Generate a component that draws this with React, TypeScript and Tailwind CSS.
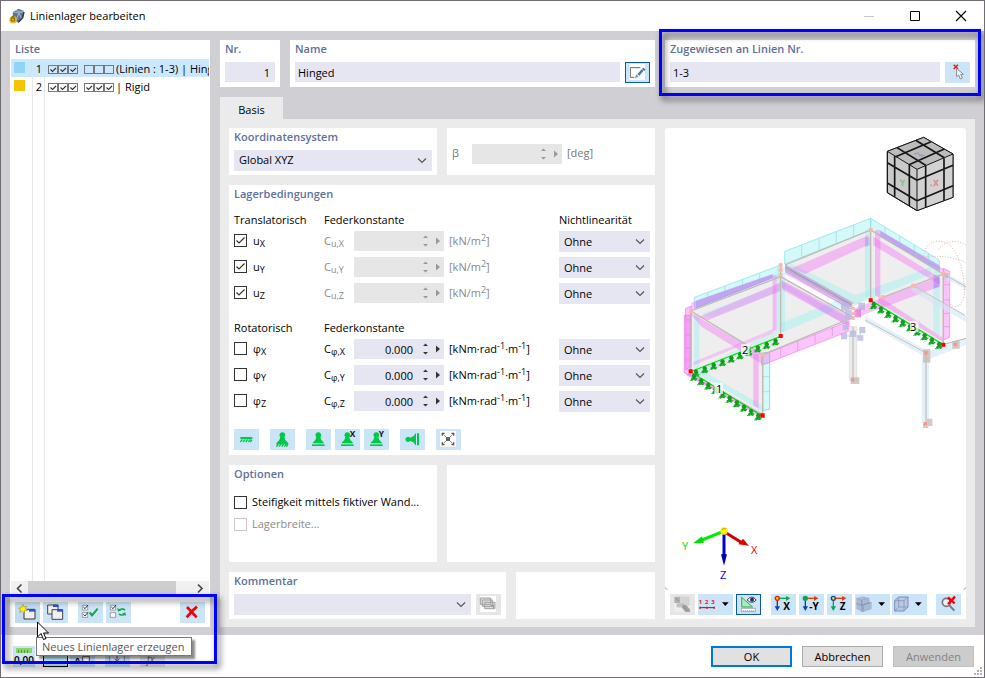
import React from 'react';

type IconProps = { children: React.ReactNode; wide?: boolean };

// Toolbar icons are drawn on a 75x63 grid, three units to a pixel
const Icon: React.FC<IconProps> = ({ children, wide }) => (
  <svg
    className={wide ? 'block h-[21px] w-[35px]' : 'block h-[21px] w-[25px]'}
    viewBox={wide ? '0 0 105 63' : '0 0 75 63'}
    fill="none"
  >
    {children}
  </svg>
);

type ToolProps = {
  label: string;
  children?: React.ReactNode;
  wide?: boolean;
  className?: string;
  disabled?: boolean;
};

const Tool: React.FC<ToolProps> = ({ label, children, wide, className = 'bg-[#cce4f7]', disabled }) => (
  <button type="button" aria-label={label} disabled={disabled} className={`shrink-0 ${className}`}>
    <Icon wide={wide}>{children}</Icon>
  </button>
);

const Card: React.FC<{ title?: string; className?: string; children?: React.ReactNode }> = ({
  title,
  className = '',
  children,
}) => (
  <section className={`bg-white px-[5px] pb-1 ${className}`}>
    {title && <h2 className="h-[18px] whitespace-nowrap font-semibold leading-[18px] text-[#5f6f98]">{title}</h2>}
    {children}
  </section>
);

const Select: React.FC<{ label: string; options: string[]; className?: string }> = ({
  label,
  options,
  className = '',
}) => (
  <div className={`relative h-[21px] ${className}`}>
    <select
      aria-label={label}
      className="block h-full w-full appearance-none bg-[#e6e6f2] pl-[5px] pr-5 text-black outline-none"
    >
      {options.map((o) => (
        <option key={o}>{o}</option>
      ))}
    </select>
    <svg className="pointer-events-none absolute right-1 top-[7px] h-2 w-3" viewBox="0 0 12 8" fill="none">
      <path d="M2 1.5 6 5.5 10 1.5" stroke="#555" strokeWidth="1.1" />
    </svg>
  </div>
);

const Spinner: React.FC<{ label: string; value?: string; disabled?: boolean }> = ({ label, value = '', disabled }) => (
  <div className={`flex h-5 w-[90px] items-center ${disabled ? 'bg-[#e6e6e6] text-[#999]' : 'bg-[#e6e6f2] text-[#333]'}`}>
    <input
      aria-label={label}
      defaultValue={value}
      disabled={disabled}
      className="h-full w-[59px] bg-transparent text-right text-black outline-none"
    />
    <svg className="ml-auto h-5 w-[26px]" viewBox="0 0 26 20" fill="currentColor">
      <path d="M5 7 7.500 4.500 10 7zM5 13l2.500 2.500L10 13zM18 6.500v7l4-3.500z" />
    </svg>
  </div>
);

const CheckBox: React.FC<{ id: string; checked?: boolean; disabled?: boolean }> = ({ id, checked, disabled }) => (
  <span className="relative h-[13px] w-[13px] shrink-0">
    <input
      id={id}
      type="checkbox"
      defaultChecked={checked}
      disabled={disabled}
      className="peer block h-[13px] w-[13px] appearance-none border border-[#333] bg-white disabled:border-[#c8c8c8]"
    />
    <svg
      className="pointer-events-none absolute left-0 top-0 hidden h-[13px] w-[13px] peer-checked:block"
      viewBox="0 0 13 13"
      fill="none"
    >
      <path d="M2.500 6.500 5 9 10.500 3.500" stroke="#333" strokeWidth="1.2" />
    </svg>
  </span>
);

const MiniBoxes: React.FC<{ checked: boolean }> = ({ checked }) => (
  <svg className="h-2.5 w-[30px] shrink-0" viewBox="0 0 30 10" fill="none" stroke="#333">
    {[0, 10, 20].map((x) => (
      <g key={x}>
        <rect x={x + 0.5} y="0.5" width="9" height="8" stroke="#777" />
        {checked && <path d={`M${x + 2.5} 4.500l2 2 3.500-3.500`} strokeWidth="1.1" />}
      </g>
    ))}
  </svg>
);

const listItems = [
  { no: 1, color: 'bg-[#8fd6f5]', row: 'bg-[#cce8ff]', rotation: false, text: '(Linien : 1-3) | Hinged' },
  { no: 2, color: 'bg-[#f5c400]', row: '', rotation: true, text: '| Rigid' },
];

const ListPanel: React.FC = () => (
  <aside className="flex w-[200px] shrink-0 flex-col bg-white px-px pb-1">
    <h2 className="mb-px h-[18px] pl-1 font-semibold leading-[18px] text-[#5f6f98]">Liste</h2>
    <div className="flex-1 bg-[linear-gradient(#e8e8e8,#e8e8e8),linear-gradient(#e8e8e8,#e8e8e8)] bg-[length:1px_100%,1px_100%] bg-[position:21px_0,33px_0] bg-no-repeat">
      <ul>
        {listItems.map((item) => (
          <li key={item.no} className={`flex h-[18px] overflow-hidden whitespace-nowrap leading-5 text-black ${item.row}`}>
            <span className={`ml-[3px] mt-[3px] h-[11px] w-[11px] shrink-0 ${item.color}`} />
            <span className="w-[17px] shrink-0 text-right">{item.no}</span>
            <span className="ml-1.5 mt-1.5 flex gap-1.5">
              <MiniBoxes checked />
              <MiniBoxes checked={item.rotation} />
            </span>
            <span className="ml-0.5">{item.text}</span>
          </li>
        ))}
      </ul>
    </div>
    <div className="mb-2 flex h-[13px] items-stretch bg-[#f0f0f0]">
      <svg className="h-[13px] w-[17px]" viewBox="0 0 17 13" fill="none">
        <path d="M10.500 3.500 6.500 7.500l4 4" stroke="#444" strokeWidth="1.6" />
      </svg>
      <div className="w-[148px] bg-[#cdcdcd]" />
      <svg className="ml-auto h-[13px] w-[17px]" viewBox="0 0 17 13" fill="none">
        <path d="M6 3.500 10 7.500l-4 4" stroke="#444" strokeWidth="1.6" />
      </svg>
    </div>
    <div className="flex px-1">
      <Tool label="Neues Linienlager erzeugen" className="bg-[#c0dcf3]">
        <path d="M27 22h33v29H27z" fill="#eef0f4" stroke="#333" strokeWidth="3" />
        <path d="M42 22h18v7H42z" fill="#2a50d8" />
        <path d="m24 7 3 8 9-2-5 7 7 5-9 1-2 8-5-6-8 3 3-8-6-4 8-2z" fill="#fff200" stroke="#a89820" strokeWidth="2" />
      </Tool>
      <Tool label="Kopieren" className="ml-[3px] bg-[#cce4f7]">
        <path d="M14 9h31v27H14z" fill="#eef0f4" stroke="#444" strokeWidth="3" />
        <path d="M30 8h16v7H30z" fill="#2a50d8" />
        <path d="M27 23h32v29H27z" fill="#eef0f4" stroke="#444" strokeWidth="3" />
        <path d="M42 22h18v7H42z" fill="#2a50d8" />
      </Tool>
      <Tool label="Alle markieren" className="ml-2.5 bg-[#cce4f7]">
        <path d="M13 10h16v14H13zM13 32h16v14H13z" fill="#fff" stroke="#777" strokeWidth="2" />
        <path d="m16 15 5 5 9-11M16 37l5 5 9-11" stroke="#333" strokeWidth="3" />
        <path d="m35 31 7 9 17-20" stroke="#10a848" strokeWidth="6" />
      </Tool>
      <Tool label="Auswahl umkehren" className="ml-[3px] bg-[#cce4f7]">
        <path d="M13 10h16v14H13zM13 32h16v14H13z" fill="#fff" stroke="#777" strokeWidth="2" />
        <path d="m16 15 5 5 9-11" stroke="#333" strokeWidth="3" />
        <path d="M39 25c4-5 13-6 18 0M56 35c-4 5-12 5-17 1" stroke="#10a848" strokeWidth="5" />
        <path d="m34 18 2 11 10-4zM60 42l-2-11-10 4z" fill="#10a848" />
      </Tool>
      <Tool label="Löschen" className="ml-auto bg-[#cce4f7]">
        <path d="M21 15c8 8 18 19 29 31M51 14C39 23 29 34 20 46" stroke="#f80000" strokeWidth="8" />
      </Tool>
    </div>
  </aside>
);

const supportPath = 'M37 10a8 8 0 0 1 6 14l3 9 8 8v2H20v-2l8-8 3-9a8 8 0 0 1 6-14z';

const SupportTools: React.FC = () => (
  <div className="mt-[17px] flex">
    <Tool label="Linie gelagert">
      <path d="M19 24h36v6H19z" fill="#00c94a" />
      <path d="m19 39 6-8m2 8 6-8m2 8 6-8m2 8 6-8m0 8 5-7" stroke="#00c94a" strokeWidth="4" />
    </Tool>
    <Tool label="Eingespannt" className="ml-[11px] bg-[#cce4f7]">
      <path d={supportPath} fill="#00c94a" />
      <path d="m19 53 6-8m2 8 6-8m2 8 6-8m2 8 6-8m0 8 5-7M19 44h36" stroke="#00c94a" strokeWidth="4" />
    </Tool>
    <Tool label="Gelenkig" className="ml-[11px] bg-[#cce4f7]">
      <path d={supportPath} fill="#00c94a" />
      <path d="M18 46h38v5H18z" fill="#00c94a" />
    </Tool>
    <Tool label="Gelenkig X" className="ml-1 bg-[#cce4f7]">
      <path d={supportPath} fill="#00c94a" />
      <path d="M18 46h38v5H18z" fill="#00c94a" />
      <text x="44" y="24" fontSize="25" fontWeight="700" fill="#111">X</text>
    </Tool>
    <Tool label="Gelenkig Y" className="ml-1 bg-[#cce4f7]">
      <path d={supportPath} fill="#00c94a" />
      <path d="M18 46h38v5H18z" fill="#00c94a" />
      <text x="44" y="24" fontSize="25" fontWeight="700" fill="#111">Y</text>
    </Tool>
    <Tool label="Seitlich gelagert" className="ml-[11px] bg-[#cce4f7]">
      <path d="M16 31a8 8 0 0 1 14-5l10-4 7-9h1v36h-1l-7-9-10-4a8 8 0 0 1-14-5zM51 13h6v36h-6z" fill="#00c94a" />
    </Tool>
    <Tool label="Frei" className="ml-[11px] bg-[#cce4f7]">
      <path d="M12 6h48v48H12z" fill="#fff" />
      <path d="m22 16 28 28M50 16 22 44" stroke="#888" strokeWidth="3" />
      <path d="M30 24h12v12H30z" fill="#5c6850" />
      <path d="M19 20v-7h7M46 13h7v7M19 40v7h7M53 40v7h-7" stroke="#555" strokeWidth="4" />
    </Tool>
  </div>
);

type ConditionRow = { id: string; symbol: string; axis: string; checked: boolean };

const translations: ConditionRow[] = [
  { id: 'ux', symbol: 'u', axis: 'X', checked: true },
  { id: 'uy', symbol: 'u', axis: 'Y', checked: true },
  { id: 'uz', symbol: 'u', axis: 'Z', checked: true },
];

const rotations: ConditionRow[] = [
  { id: 'phix', symbol: 'φ', axis: 'X', checked: false },
  { id: 'phiy', symbol: 'φ', axis: 'Y', checked: false },
  { id: 'phiz', symbol: 'φ', axis: 'Z', checked: false },
];

const Small: React.FC<{ children: React.ReactNode; up?: boolean }> = ({ children, up }) => (
  <span className={up ? 'align-[4px] text-[9px] leading-none' : 'align-[-2px] text-[9px] leading-none'}>{children}</span>
);

const Conditions: React.FC<{ rows: ConditionRow[] }> = ({ rows }) => (
  <div className="mt-0.5 space-y-[5px]">
    {rows.map((r) => (
      <div key={r.id} className="grid grid-cols-[90px_30px_90px_1fr_91px] items-start leading-5">
        <div className="flex h-[19px] items-center gap-1.5">
          <CheckBox id={r.id} checked={r.checked} />
          <label htmlFor={r.id} className="whitespace-nowrap text-black">
            {r.symbol}
            <Small>{r.axis}</Small>
          </label>
        </div>
        <span className={`h-5 whitespace-nowrap ${r.checked ? 'text-[#888]' : 'text-black'}`}>
          C
          <Small>
            {r.symbol},{r.axis}
          </Small>
        </span>
        <Spinner label={`Federkonstante ${r.symbol}${r.axis}`} value={r.checked ? '' : '0.000'} disabled={r.checked} />
        {r.checked ? (
          <span className="h-5 whitespace-nowrap pl-[5px] text-[#888]">
            [kN/m<Small up>2</Small>]
          </span>
        ) : (
          <span className="h-5 whitespace-nowrap pl-[5px] text-black">
            [kNm·rad<Small up>-1</Small>·m<Small up>-1</Small>]
          </span>
        )}
        <Select label={`Nichtlinearität ${r.symbol}${r.axis}`} options={['Ohne']} />
      </div>
    ))}
  </div>
);

// Support symbols spread evenly along a line of the model
const SupportLine: React.FC<{ from: [number, number]; to: [number, number]; n: number }> = ({ from, to, n }) => (
  <g>
    <path d={`M${from[0]} ${from[1]}L${to[0]} ${to[1]}`} stroke="#00e800" strokeWidth="4" />
    {Array.from({ length: n }, (_, i) => {
      const t = (i + 0.4) / n;
      const x = from[0] + (to[0] - from[0]) * t;
      const y = from[1] + (to[1] - from[1]) * t;
      return (
        <g key={i} transform={`translate(${x} ${y})`}>
          <path d="M-3 0H4L8 8 5 11 11 15 6 21 0 19-7 22-9 15-4 11-7 7z" fill="#149a24" />
          <path d="M-12 20 12 14" stroke="#20d030" strokeWidth="3" strokeDasharray="5 3" />
        </g>
      );
    })}
  </g>
);

const Model: React.FC = () => (
  <g transform="translate(0 82) scale(.33333)" fill="none">
    {/* walls */}
    <g fill="#eeeeee">
      <path d="M78 303 347 200V378L78 483z" />
      <path d="M78 303 293 434V616L78 483z" />
      <path d="M617 60 835 192V404L617 271z" />
      <path d="M360 165 617 60V260L565 290z" />
      <path d="M347 200 565 320 293 434 78 303z" />
    </g>
    {/* cyan bands */}
    <g fill="#90f0f0" fillOpacity=".4">
      <path d="M88 262 347 165V195L88 296z" stroke="#80e0e8" strokeWidth="2" />
      <path d="M359 124 617 25V60L359 162z" stroke="#80e0e8" strokeWidth="2" />
      <path d="M617 25 823 150V186L617 60z" stroke="#80e0e8" strokeWidth="2" />
      <path d="M88 310 103 318V470L88 478z" />
      <path d="M335 170H360V360L335 372z" />
      <path d="M293 428H314V598L293 602z" stroke="#70c8e0" strokeWidth="2" />
      <path d="M110 312 347 222V242L140 322z" />
      <path d="M600 60H617V255L600 264z" />
      <path d="M375 160 570 255 800 170V192L572 284 375 188z" />
      <path d="M805 180H824V375L805 364z" />
      <path d="M100 475 290 585V603L90 485z" />
      <path d="M110 470 335 362V380L110 488z" fillOpacity=".25" />
      <path d="M347 340 540 262 556 280 347 370z" />
    </g>
    {/* magenta bands */}
    <g fill="#f46cf4" fillOpacity=".4">
      <path d="M62 296 78 288V468L62 480z" stroke="#f070f0" strokeWidth="2" />
      <path d="M58 316H76V497L58 488z" stroke="#f070f0" strokeWidth="2" />
      <path d="M100 322 345 218V244L130 330z" />
      <path d="M70 304 290 432V462L110 350z" />
      <path d="M323 195H335V358L323 366z" />
      <path d="M78 278 323 193V205L78 300z" />
      <path d="M85 456 323 358V370L85 466z" fillOpacity=".3" />
      <path d="M350 210 555 320V352L350 238z" />
      <path d="M360 165 560 280V300L360 192z" />
      <path d="M290 436 550 334V364L290 466z" stroke="#f080f0" strokeWidth="2" />
      <path d="M265 432H281V594L265 586z" />
      <path d="M380 175 610 76V104L420 192z" />
      <path d="M630 60H646V262L630 256z" />
      <path d="M646 62 838 178V190L646 82z" />
      <path d="M625 80 825 204V224L625 106z" />
      <path d="M835 175 854 184V382L835 390z" stroke="#f080f0" strokeWidth="2" />
      <path d="M570 294 822 200V230L580 320z" />
      <path d="M640 258 835 384V396L640 278z" />
      <path d="M78 488 290 610V622L62 494z" fillOpacity=".6" />
    </g>
    <g fill="#8060e8" fillOpacity=".3">
      <path d="M92 272 323 192V204L92 296z" />
      <path d="M360 165 560 280V292L360 182z" />
      <path d="M350 214 545 322V345L350 232z" fillOpacity=".15" />
      <path d="M646 62 823 165V184L646 80z" />
      <path d="M806 196H824V230L806 236z" />
      <path d="M600 82H617V106L600 112z" fillOpacity=".2" />
    </g>
    {/* rulings of the load bands */}
    <g stroke="#80c8d8" strokeWidth="2" opacity=".7">
      <path d="M128 248v28M180 228v28M232 208v28M284 190v28M410 105v34M462 86v33M514 65v34M566 45v34M660 52v32M704 78v32M748 105v32M790 130v32M293 460h20M293 500h20M293 545h20" />
      <path d="M347 440v-26M398 422v-28M450 400v-26M502 378v-26M62 330h14M62 375h14M62 415h14M62 450h14M836 224h18M836 270h18M836 310h18M836 350h18" stroke="#c878d8" />
    </g>
    {/* frame edges */}
    <path
      d="M78 303 347 200M78 303 293 434M78 303V483M347 165V378M293 434V616M293 434 565 322M347 200 565 322M360 165 617 60 835 192V404M617 60V271M360 165 565 280M362 178 560 292M653 262 835 192"
      stroke="#bcbcb4"
      strokeWidth="4"
    />
    <path d="M362 172 562 286M362 185 558 298" stroke="#6860b0" strokeOpacity=".5" strokeWidth="2" />
    {/* columns and beams of the neighbouring frame */}
    <g fill="#cfe6f4" fillOpacity=".55">
      <path d="M770 440H792V640H770z" />
      <path d="M600 318 790 424 780 442 600 336z" />
      <path d="M790 424 903 385V405L795 446z" />
      <path d="M740 224 903 318V336L740 244z" />
      <path d="M835 186 903 222V240L835 202z" />
    </g>
    <path d="M745 227 900 316M835 192 903 230M600 330 785 430" stroke="#c4c4c0" strokeWidth="3" />
    <path d="M553 350H575V512H553z" fill="#ececec" stroke="#dcdcdc" strokeWidth="2" />
    <path d="M564 350V508M783 430V640M835 404 903 385" stroke="#b4b4b4" strokeWidth="3" />
    <g stroke="#e4b4b4" strokeWidth="3" strokeDasharray="3 5">
      <path d="M776 140C780 95 815 85 845 100S898 180 898 240M776 140C830 135 890 145 903 160M820 118C840 90 880 90 903 105M840 190C838 260 850 290 870 290S900 265 900 225" />
    </g>
    <g fill="#b8b8e0" fillOpacity=".8">
      <path d="M528 280h24v22h-24zM580 278h20v22h-20zM533 344h16v16h-16zM583 351h18v18h-18zM528 370h18v18h-18zM555 362h18v18h-18zM577 376h18v16h-18zM540 300h20v26h-20z" />
    </g>
    <path d="M540 325V378H586V350" stroke="#c4c4e4" strokeWidth="3" />
    <path d="M568 298h20v24h-20z" fill="#e070d0" fillOpacity=".7" />
    <g fill="#f8b8ac">
      <path d="M341 160h12v10h-12zM341 175h12v10h-12zM341 190h12v10h-12zM611 54h12v12h-12zM647 256h12v12h-12zM739 221h12v12h-12zM72 297h12v12h-12zM287 428h12v12h-12zM829 186h12v12h-12zM559 290h10v10h-10zM559 305h10v10h-10zM559 320h10v10h-10z" />
    </g>
    <g fill="#c8b8b0" fillOpacity=".75">
      <path d="M557 502h26v20h-26zM774 418h22v40h-22zM862 392h22v24h-22zM786 626h16v22h-16zM774 640h16v14h-16zM836 190h14v14h-14z" />
    </g>
    <g fill="#f09890">
      <path d="M558 505h10v10h-10zM776 636h10v10h-10zM866 398h10v10h-10zM778 424h10v10h-10z" />
    </g>
    <SupportLine from={[82, 483]} to={[347, 379]} n={10} />
    <SupportLine from={[78, 486]} to={[292, 618]} n={10} />
    <SupportLine from={[617, 271]} to={[835, 404]} n={10} />
    <g fill="#ff0000">
      <path d="M71 478h12v12H71zM341 372h12v12h-12zM286 610h13v13h-13zM611 265h12v12h-12zM829 398h12v12h-12z" />
    </g>
    <g fill="#fff" fillOpacity=".75">
      <path d="M228 402h26v34h-26zM148 518h26v34h-26zM735 333h26v34h-26z" />
    </g>
  </g>
);

const Cube: React.FC = () => (
  <g transform="translate(-10 -128) scale(.33333)">
    <path d="M806 412 894 462V592L786 632 697 578V454z" fill="#cacaca" stroke="#161616" strokeWidth="3" />
    <path d="M697 454 786 508 894 462 806 412z" fill="#bcbcbc" />
    <path d="M786 508 894 462V592L786 632z" fill="#d2d2d2" />
    <g fill="none" stroke="#161616" strokeWidth="5" strokeLinejoin="round">
      <path d="M786 508V632M697 454 786 508 894 462" strokeWidth="3" />
      <path d="M719 468V590M763 495V618M697 488 786 541M697 549 786 602" />
      <path d="M812 498V622M867 475V602M786 541 894 496M786 602 894 557" />
      <path d="M726 443 812 496M782 421 868 473M722 470 828 425M762 494 868 447" />
      <path d="M697 454 806 412 894 462V592L786 632 697 578z" strokeWidth="3" />
    </g>
    <path d="m778 462 12-3 4 8 8-3M798 470l11-5" stroke="#9c9cc8" strokeWidth="4" fill="none" />
    <path d="m735 539 8 8m6-8-6 9v10" stroke="#86c886" strokeWidth="5" fill="none" />
    <path d="m836 540 13 17m0-18-13 20M826 556h5" stroke="#dc9090" strokeWidth="5" fill="none" />
  </g>
);

const Axes: React.FC = () => (
  <g transform="translate(-5 382) scale(.33333)">
    <path d="M190 64 126 90" stroke="#00ee00" strokeWidth="9" />
    <path d="m100 99 26-20 6 20z" fill="#00e000" />
    <path d="m194 66 48 30" stroke="#d00000" strokeWidth="9" />
    <path d="m267 107-18-21-14 17z" fill="#e00000" />
    <path d="M192 66v70" stroke="#0000dd" strokeWidth="9" />
    <path d="m192 167-9-34h18z" fill="#0000a8" />
    <circle cx="192" cy="63" r="11" fill="#ffee00" />
    <path d="M186 60a8 8 0 0 1 11-4" stroke="#b8a000" strokeWidth="3" fill="none" />
  </g>
);

const Drop: React.FC<{ x: number }> = ({ x }) => <path d={`M${x} 25h20l-10 11z`} fill="#000" />;

const Preview: React.FC = () => (
  <section className="flex min-w-0 flex-1 flex-col rounded-t-[3px] bg-white pb-1">
    <svg className="min-h-0 w-full flex-1" viewBox="0 0 301 462" role="img" aria-label="Modell">
      <Cube />
      <Model />
      <Axes />
      <path d="M.500 459.500q0 2 2 2M300.500 459.500q0 2-2 2" stroke="#aaa" fill="none" />
      <g fontSize="11" fill="#000">
        <text x="77" y="226">2</text>
        <text x="51" y="265">1</text>
        <text x="245" y="203">3</text>
      </g>
      <g fontSize="11">
        <text x="17" y="422" fill="#00e000">Y</text>
        <text x="86" y="426" fill="#ee0000">X</text>
        <text x="55" y="451" fill="#0000ee">Z</text>
      </g>
    </svg>
    <div className="mt-1 flex px-[5px]">
      <Tool label="Rendern" disabled className="bg-[#e6e6e6]">
        <path d="M12 6h48v48H12z" fill="#eee" />
        <path d="M13 8h23v19H13z" fill="#b0b0b0" />
        <path d="M30 7h29v28H30z" fill="#d4d4d4" />
        <path d="M20 28h22v12H20z" fill="#c0c0c0" />
        <path d="M38 32h10l12 14v8H46L36 42z" fill="#a4a4a4" />
        <path d="m17 12 9 9M40 36l12 14" stroke="#888" strokeWidth="3" />
      </Tool>
      <Tool label="Nummerierung" wide className="ml-[3px] bg-[#cce4f7]">
        <g fontSize="18" fontWeight="700" fill="#e01818">
          <text x="2" y="31">1</text>
          <text x="21" y="31">2</text>
          <text x="40" y="31">3</text>
        </g>
        <path d="M6 41h43" stroke="#333366" strokeWidth="3" />
        <path d="M4 38h5v6H4zM24 38h5v6h-5zM46 38h5v6h-5z" fill="#d81818" />
        <Drop x={72} />
      </Tool>
      <Tool label="Ansicht" className="ml-[3px] bg-[#cce4f7] outline outline-1 -outline-offset-1 outline-[#0a5a9c]">
        <path d="M17 10v29h33z" fill="#a8ecb8" stroke="#38a860" strokeWidth="3" />
        <path d="M16 43h42v10H16z" fill="#fff" stroke="#888" strokeWidth="2" />
        <path d="M22 48v4m6-4v4m6-4v4m6-4v4m6-4v4m6-4v4" stroke="#888" strokeWidth="2" />
        <path d="M34 18c6-11 20-11 26 0-6 9-20 9-26 0z" fill="#fff" stroke="#333a66" strokeWidth="3" />
        <circle cx="48" cy="17" r="6" fill="#222a66" />
      </Tool>
      <Tool label="Ansicht in X" className="ml-2.5 bg-[#cce4f7]">
        <path d="M20 13h28" stroke="#10a050" strokeWidth="4" />
        <path d="m45 6 13 7-13 8z" fill="#10a050" />
        <path d="M19 16v24" stroke="#1040b0" strokeWidth="4" />
        <path d="m11 37 8 14 8-14z" fill="#1040b0" />
        <circle cx="19" cy="13" r="6" fill="#ffd800" stroke="#d82010" strokeWidth="4" />
        <text x="37" y="49" fontSize="30" fontWeight="700" fill="#000">X</text>
      </Tool>
      <Tool label="Ansicht in -Y" className="ml-[3px] bg-[#cce4f7]">
        <path d="M20 13h28" stroke="#d84010" strokeWidth="4" />
        <path d="m45 6 13 7-13 8z" fill="#d84010" />
        <path d="M19 16v24" stroke="#1040b0" strokeWidth="4" />
        <path d="m11 37 8 14 8-14z" fill="#1040b0" />
        <circle cx="19" cy="13" r="8" fill="#10a050" />
        <text x="31" y="49" fontSize="30" fontWeight="700" fill="#000">-Y</text>
      </Tool>
      <Tool label="Ansicht in Z" className="ml-[3px] bg-[#cce4f7]">
        <path d="M20 13h28" stroke="#d84010" strokeWidth="4" />
        <path d="m45 6 13 7-13 8z" fill="#d84010" />
        <path d="M19 16v24" stroke="#10a050" strokeWidth="4" />
        <path d="m11 37 8 14 8-14z" fill="#10a050" />
        <circle cx="19" cy="13" r="6" fill="#ffd800" stroke="#1040b0" strokeWidth="4" />
        <text x="38" y="49" fontSize="30" fontWeight="700" fill="#000">Z</text>
      </Tool>
      <Tool label="Darstellung" wide className="ml-[3px] bg-[#cce4f7]">
        <path d="M4 13 24 7l18 5v14l8-2v18L22 53 4 45z" fill="#a8bad4" />
        <path d="m4 13 16 5 22-6v14l-22 7v20l30-9" stroke="#8ca0c0" strokeWidth="2" />
        <path d="M20 18v15l4 3v16M4 29l16 5 28-9" stroke="#7088ac" strokeWidth="2" />
        <Drop x={70} />
      </Tool>
      <Tool label="Schnittbox" wide className="ml-0.5 bg-[#cce4f7]">
        <path d="M8 20 20 9h28v30L36 51H8z" fill="#b8c8e2" stroke="#7890b4" strokeWidth="3" />
        <path d="M8 20h28v31M36 20 48 9M20 9v30h28M20 39 8 51" stroke="#7890b4" strokeWidth="2" />
        <Drop x={69} />
      </Tool>
      <Tool label="Ansicht zurücksetzen" className="ml-auto bg-[#cce4f7]">
        <circle cx="31" cy="25" r="12" stroke="#777" strokeWidth="5" fill="#e8f0f8" />
        <path d="m40 34 15 16" stroke="#777" strokeWidth="6" />
        <path d="m36 10 20 18M57 8 36 30" stroke="#f00000" strokeWidth="7" />
      </Tool>
    </div>
  </section>
);

const TitleBar: React.FC = () => (
  <header className="flex h-[30px] items-center bg-white pl-2 text-black">
    <svg className="h-4 w-4" viewBox="0 0 48 48">
      <path d="M12 12 28 2l17 7-3 20-14 15-18-12z" fill="#5c7890" />
      <path d="m14 12 16 3 8 17M20 7l18 6M30 14 22 36M45 10l-13 4" stroke="#a8bcd4" strokeWidth="3" fill="none" />
      <path d="m28 43 13-13 4-18" stroke="#28384c" strokeWidth="4" fill="none" />
      <circle cx="12" cy="35" r="11" fill="#e8b820" />
      <path d="M7 31h10v8H7zM9 31v-5h6v5" stroke="#8a6400" strokeWidth="3" fill="none" />
    </svg>
    <h1 className="ml-[5px] text-[11px]">Linienlager bearbeiten</h1>
    <div className="ml-auto flex h-full items-center">
      <button type="button" aria-label="Minimieren" className="flex w-[46px] justify-center">
        <svg className="h-3 w-3" viewBox="0 0 12 12"><path d="M1 6.500h10" stroke="#c8c8c8" /></svg>
      </button>
      <button type="button" aria-label="Maximieren" className="flex w-[46px] justify-center">
        <svg className="h-3 w-3" viewBox="0 0 12 12" fill="none"><path d="M1.500 1.500h9v9h-9z" stroke="#000" /></svg>
      </button>
      <button type="button" aria-label="Schließen" className="flex w-[46px] justify-center">
        <svg className="h-3 w-3" viewBox="0 0 12 12"><path d="m1 1 10 10M11 1 1 11" stroke="#000" strokeWidth="1.1" /></svg>
      </button>
    </div>
  </header>
);

const Footer: React.FC = () => (
  <footer className="relative flex h-[42px] items-center bg-white pl-3 pr-2.5">
    <button type="button" className="flex h-[21px] w-[22px] flex-col items-center bg-[#cce4f7] text-[10px] font-semibold leading-[14px] text-black">
      <svg className="mt-0.5 h-[5px] w-4 shrink-0" viewBox="0 0 16 5">
        <path d="M0 0h16v5H0z" fill="#8cd468" />
        <path d="M2.500 2v3m3-3v3m3-3v3m3-3v3" stroke="#4c9c38" />
      </svg>
      0,00
    </button>
    <Tool label="Farbe" className="ml-2 bg-[#c4f2ff] outline outline-1 -outline-offset-1 outline-black" />
    <Tool label="Beschriftung" className="ml-0.5 bg-[#cce4f7]">
      <path d="M38 32h20v18H38z" fill="#fff" stroke="#555" strokeWidth="3" />
      <text x="13" y="53" fontSize="28" fontWeight="700" fill="#111">A</text>
    </Tool>
    <Tool label="Anzeige" className="ml-2.5 bg-[#cce4f7]">
      <path d="M14 16h44v30H14z" fill="#e4ecf4" stroke="#8898a8" strokeWidth="3" />
      <path d="M36 28v16m-7-6 7 8 7-8" stroke="#556" strokeWidth="3" />
    </Tool>
    <Tool label="Funktion" disabled className="ml-2.5 bg-[#e6e6e6]">
      <text x="20" y="52" fontSize="30" fontStyle="italic" fill="#666">fx</text>
    </Tool>
    <div className="ml-auto flex gap-2.5 text-black">
      <button type="button" className="h-[21px] w-[81px] border-2 border-[#0078d7] bg-[#e1e1e1] leading-[17px]">OK</button>
      <button type="button" className="h-[21px] w-[81px] border border-[#adadad] bg-[#e1e1e1] leading-[19px]">Abbrechen</button>
      <button type="button" disabled className="h-[21px] w-[81px] border border-[#bfbfbf] bg-[#cccccc] leading-[19px] text-[#838383]">
        Anwenden
      </button>
    </div>
    <svg className="absolute bottom-0.5 right-0.5 h-2 w-2" viewBox="0 0 8 8" fill="#b4b4b4">
      <path d="M6 0h2v2H6zM3 3h2v2H3zM6 3h2v2H6zM0 6h2v2H0zM3 6h2v2H3zM6 6h2v2H6z" />
    </svg>
  </footer>
);

const App: React.FC = () => {
  return (
    <div className="relative flex min-h-screen flex-col overflow-hidden border border-[#6f6d72] bg-white font-['Open_Sans','Noto_Sans',sans-serif] text-[11px]">
      <TitleBar />
      <main className="flex flex-1 gap-2.5 bg-[#d0cfd4] px-[9px] pb-2 pt-[9px]">
        <ListPanel />
        <div className="flex min-w-0 flex-1 flex-col">
          <div className="flex gap-2.5">
            <Card title="Nr." className="w-[60px]">
              <input
                aria-label="Nr."
                defaultValue="1"
                className="mt-1 block h-5 w-full bg-[#e6e6f2] pr-[5px] text-right text-black outline-none"
              />
            </Card>
            <Card title="Name" className="w-[365px]">
              <div className="mt-1 flex h-[21px] gap-[5px]">
                <input aria-label="Name" defaultValue="Hinged" className="h-5 min-w-0 flex-1 bg-[#e6e6f2] px-[3px] text-black outline-none" />
                <Tool label="Name bearbeiten" className="bg-[#cce4f7] outline outline-1 -outline-offset-1 outline-[#0a5a9c]">
                  <path d="M12 6h48v48H12z" fill="#fff" />
                  <path d="M46 17H16v29h12" stroke="#666" strokeWidth="3" />
                  <path d="M53 24 40 39" stroke="#4878b0" strokeWidth="8" />
                  <path d="m30 48 4-11 7 7z" fill="#6890c0" />
                  <path d="m53 19 7 6" stroke="#4878b0" strokeWidth="6" />
                </Tool>
              </div>
            </Card>
            <Card title="Zugewiesen an Linien Nr." className="min-w-0 flex-1">
              <div className="mt-1 flex h-[21px] gap-[5px]">
                <input
                  aria-label="Zugewiesen an Linien Nr."
                  defaultValue="1-3"
                  className="h-5 min-w-0 flex-1 bg-[#e6e6f2] px-[3px] text-black outline-none"
                />
                <Tool label="Linien wählen">
                  <path d="m26 8 13 12M39 8 26 21" stroke="#f01010" strokeWidth="4" />
                  <path d="M35 19v25l6-5 5 12 6-3-5-11h8z" fill="#fff" stroke="#888" strokeWidth="3" />
                </Tool>
              </div>
            </Card>
          </div>

          <div className="mt-2.5 flex">
            <button type="button" className="h-[22px] w-[63px] bg-[#ebebeb] pt-1 leading-[18px] text-black">Basis</button>
          </div>

          <div className="flex flex-1 gap-2.5 bg-[#ebebeb] px-[9px] pb-2 pt-[9px]">
            <div className="flex w-[426px] shrink-0 flex-col gap-2.5">
              <div className="flex gap-2.5">
                <Card title="Koordinatensystem" className="w-[208px]">
                  <Select label="Koordinatensystem" options={['Global XYZ']} className="mt-1" />
                </Card>
                <Card className="flex flex-1 items-center pt-2 text-[#777]">
                  <span className="w-5">β</span>
                  <Spinner label="β" disabled />
                  <span className="ml-[5px]">[deg]</span>
                </Card>
              </div>

              <Card title="Lagerbedingungen" className="pb-[5px]">
                <div className="mt-2 grid h-[18px] grid-cols-[90px_1fr_91px] leading-[18px] text-black">
                  <span>Translatorisch</span>
                  <span>Federkonstante</span>
                  <span>Nichtlinearität</span>
                </div>
                <Conditions rows={translations} />
                <div className="mt-[15px] grid h-[18px] grid-cols-[90px_1fr] leading-[18px] text-black">
                  <span>Rotatorisch</span>
                  <span>Federkonstante</span>
                </div>
                <Conditions rows={rotations} />
                <SupportTools />
              </Card>

              <div className="flex flex-1 gap-2.5">
                <Card title="Optionen" className="w-[208px]">
                  <div className="mt-2 flex h-[22px] items-center gap-[5px] text-black">
                    <CheckBox id="wall" />
                    <label htmlFor="wall" className="whitespace-nowrap">Steifigkeit mittels fiktiver Wand...</label>
                  </div>
                  <div className="flex h-[22px] items-center gap-[5px] text-[#888]">
                    <CheckBox id="width" disabled />
                    <label htmlFor="width">Lagerbreite...</label>
                  </div>
                </Card>
                <Card className="flex-1" />
              </div>

              <div className="flex gap-2.5">
                <Card title="Kommentar" className="w-[277px]">
                  <div className="mt-1 flex gap-[5px]">
                    <Select label="Kommentar" options={['']} className="flex-1" />
                    <Tool label="Kommentare" disabled className="bg-[#e6e6e6]">
                      <path d="M12 6h48v48H12z" fill="#fff" />
                      <path d="M13 12h31v19H13zM19 18h31v19H19zM26 25h31v19H26z" fill="#dcdcdc" stroke="#a0a0a0" strokeWidth="3" />
                      <path d="M44 34h9v8" stroke="#909090" strokeWidth="3" />
                    </Tool>
                  </div>
                </Card>
                <Card className="flex-1" />
              </div>
            </div>
            <Preview />
          </div>
        </div>
      </main>
      <Footer />

      {/* tooltip with the pointer above it */}
      <div role="tooltip" className="absolute bottom-[21px] left-[35px] h-[19px] w-[156px] whitespace-nowrap border border-[#767676] bg-white pl-[5px] leading-[17px] text-[#575757] shadow-[3px_3px_2px_rgba(0,0,0,0.45)]">
        Neues Linienlager erzeugen
      </div>
      <svg className="absolute bottom-[37px] left-9 h-[19px] w-3" viewBox="0 0 12 19">
        <path d="M.500 1v15l3.500-3.500 2.500 6 2.500-1-2.500-5.500h5z" fill="#fff" stroke="#000" />
      </svg>

      {/* highlight frames */}
      <div className="pointer-events-none absolute right-[3px] top-7 h-[67px] w-[322px] border-3 border-[#0000ff] drop-shadow-[3px_4px_3px_rgba(0,0,0,0.6)]" />
      <div className="pointer-events-none absolute bottom-[13px] left-px h-[70px] w-[215px] border-3 border-[#0000ff] drop-shadow-[3px_4px_3px_rgba(0,0,0,0.6)]" />
    </div>
  );
};

export default App;
